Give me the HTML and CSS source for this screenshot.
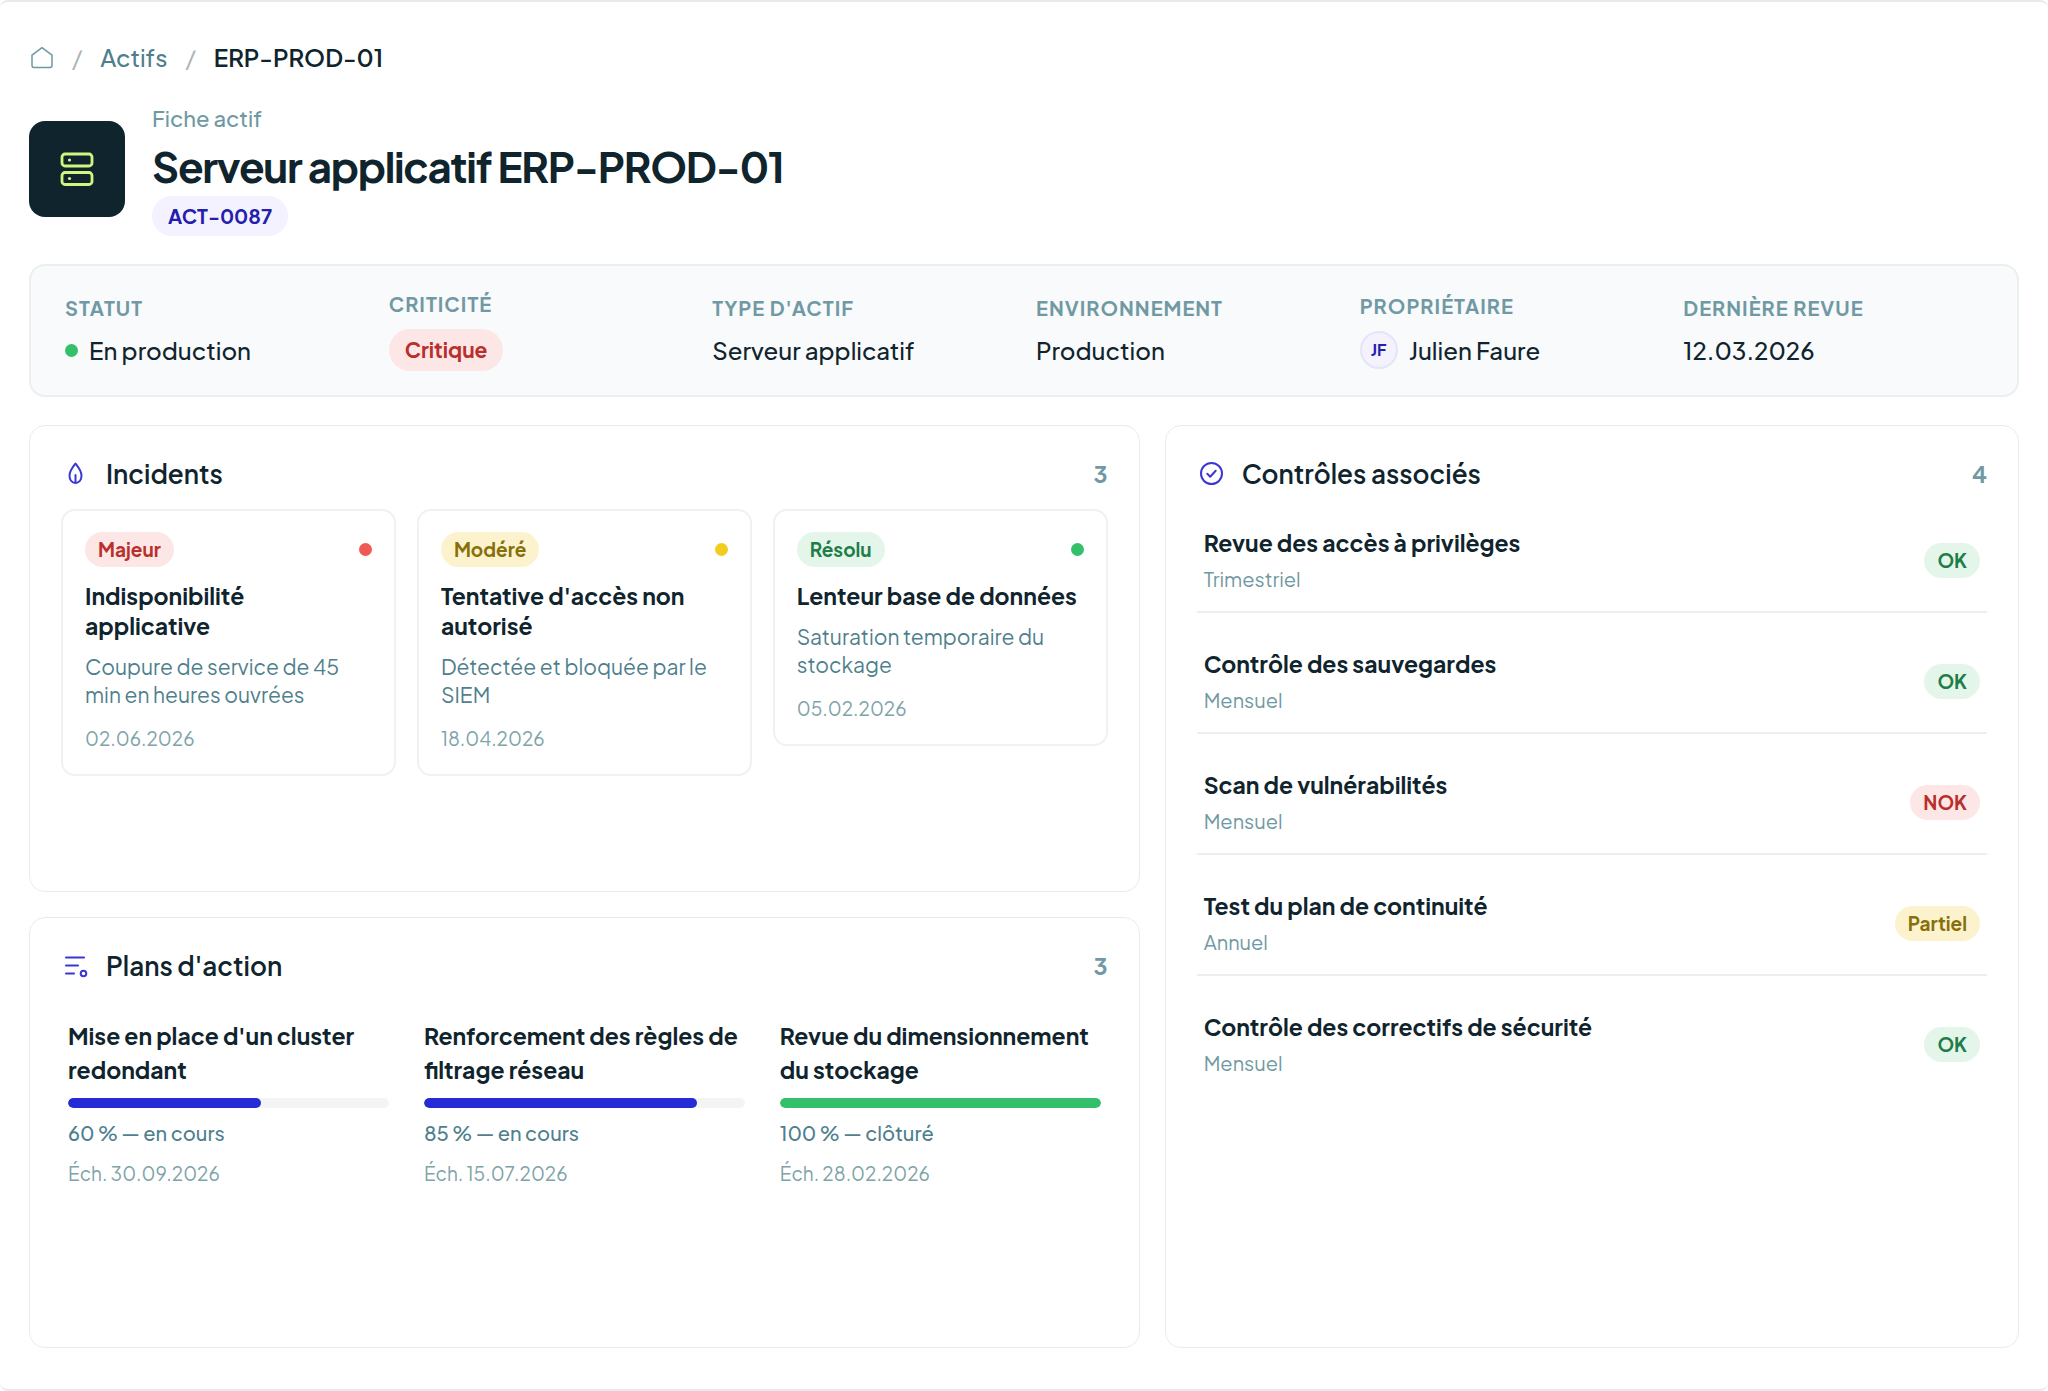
FILE: index.html
```html
<!DOCTYPE html>
<html lang="fr">
<head>
<meta charset="utf-8">
<meta name="viewport" content="width=device-width, initial-scale=1">
<title>ERP-PROD-01 – Fiche actif</title>
<link rel="stylesheet" href="styles.css">
</head>
<body>
<main class="page">
  <nav class="breadcrumb" aria-label="Fil d'Ariane">
    <a class="crumb-home" href="#" aria-label="Accueil">
      <svg width="24" height="24" viewBox="0 0 24 24" fill="none" stroke="currentColor" stroke-width="1.5" stroke-linejoin="round"><path d="M2 10.200 12 2.600l10 7.600V20.600a1.800 1.800 0 0 1-1.800 1.800H3.800A1.800 1.800 0 0 1 2 20.600Z"/></svg>
    </a>
    <span class="crumb-sep">/</span>
    <a class="crumb-link" href="#">Actifs</a>
    <span class="crumb-sep">/</span>
    <span class="crumb-current" aria-current="page">ERP-PROD-01</span>
  </nav>

  <header class="asset-header">
    <div class="asset-icon">
      <svg width="36" height="36" viewBox="0 0 36 36" fill="none" stroke="currentColor" stroke-width="2.800"><rect x="3" y="3" width="30" height="12" rx="3"/><rect x="3" y="21.500" width="30" height="12" rx="3"/><g fill="currentColor" stroke="none"><circle cx="10.500" cy="9" r="1.600"/><circle cx="10.500" cy="27.500" r="1.600"/></g></svg>
    </div>
    <div class="asset-heading">
      <p class="eyebrow">Fiche actif</p>
      <h1 class="asset-title">Serveur applicatif ERP-PROD-01</h1>
      <span class="pill pill-code">ACT-0087</span>
    </div>
  </header>

  <dl class="summary">
    <div class="fact"><dt>Statut</dt><dd><span class="dot dot-green"></span>En production</dd></div>
    <div class="fact"><dt>Criticité</dt><dd><span class="pill pill-large red">Critique</span></dd></div>
    <div class="fact"><dt>Type d'actif</dt><dd>Serveur applicatif</dd></div>
    <div class="fact"><dt>Environnement</dt><dd>Production</dd></div>
    <div class="fact"><dt>Propriétaire</dt><dd><span class="avatar">JF</span>Julien Faure</dd></div>
    <div class="fact"><dt>Dernière revue</dt><dd>12.03.2026</dd></div>
  </dl>

  <div class="panels">
    <section class="panel">
      <div class="panel-head">
        <svg class="panel-icon" viewBox="0 0 26 26" fill="none" stroke="currentColor" stroke-width="2" stroke-linecap="round" stroke-linejoin="round"><path d="M13.500 2.500C11 5.800 7.500 9.500 7.500 14.500c0 4.500 2.500 7.500 6 7.500s6-3 6-7.500C19.500 9.500 16 5.800 13.500 2.500Z"/><path d="M13.500 21.500V14"/></svg>
        <h2>Incidents</h2>
        <span class="count">3</span>
      </div>
      <div class="trio">
        <article class="incident">
          <div class="incident-top"><span class="pill red">Majeur</span><span class="dot dot-red"></span></div>
          <h3>Indisponibilité applicative</h3>
          <p class="desc">Coupure de service de 45 min en heures ouvrées</p>
          <time class="date" datetime="2026-06-02">02.06.2026</time>
        </article>
        <article class="incident">
          <div class="incident-top"><span class="pill yellow">Modéré</span><span class="dot dot-yellow"></span></div>
          <h3>Tentative d'accès non autorisé</h3>
          <p class="desc">Détectée et bloquée par le SIEM</p>
          <time class="date" datetime="2026-04-18">18.04.2026</time>
        </article>
        <article class="incident">
          <div class="incident-top"><span class="pill green">Résolu</span><span class="dot dot-green"></span></div>
          <h3>Lenteur base de données</h3>
          <p class="desc">Saturation temporaire du stockage</p>
          <time class="date" datetime="2026-02-05">05.02.2026</time>
        </article>
      </div>
    </section>

    <section class="panel panel-tall">
      <div class="panel-head">
        <svg class="panel-icon" viewBox="0 0 26 26" fill="none" stroke="currentColor" stroke-width="2" stroke-linecap="round" stroke-linejoin="round"><circle cx="13.500" cy="12.500" r="10.500"/><path d="m9.300 12.800 2.900 2.900 5.500-6"/></svg>
        <h2>Contrôles associés</h2>
        <span class="count">4</span>
      </div>
      <ul class="controls">
        <li><div><h3>Revue des accès à privilèges</h3><p>Trimestriel</p></div><span class="pill green">OK</span></li>
        <li><div><h3>Contrôle des sauvegardes</h3><p>Mensuel</p></div><span class="pill green">OK</span></li>
        <li><div><h3>Scan de vulnérabilités</h3><p>Mensuel</p></div><span class="pill red">NOK</span></li>
        <li><div><h3>Test du plan de continuité</h3><p>Annuel</p></div><span class="pill yellow">Partiel</span></li>
        <li><div><h3>Contrôle des correctifs de sécurité</h3><p>Mensuel</p></div><span class="pill green">OK</span></li>
      </ul>
    </section>

    <section class="panel">
      <div class="panel-head">
        <svg class="panel-icon" viewBox="0 0 26 26" fill="none" stroke="currentColor" stroke-width="2" stroke-linecap="round"><path d="M4 4.500h18M4 12.500h12M4 20.500h8"/><circle cx="21.500" cy="20.500" r="2.800"/></svg>
        <h2>Plans d'action</h2>
        <span class="count">3</span>
      </div>
      <div class="trio">
        <article class="plan">
          <h3>Mise en place d'un cluster redondant</h3>
          <div class="bar"><div class="bar-fill" style="width:60%"></div></div>
          <p class="progress">60 % — en cours</p>
          <p class="date">Éch. 30.09.2026</p>
        </article>
        <article class="plan">
          <h3>Renforcement des règles de filtrage réseau</h3>
          <div class="bar"><div class="bar-fill" style="width:85%"></div></div>
          <p class="progress">85 % — en cours</p>
          <p class="date">Éch. 15.07.2026</p>
        </article>
        <article class="plan">
          <h3>Revue du dimensionnement du stockage</h3>
          <div class="bar"><div class="bar-fill done" style="width:100%"></div></div>
          <p class="progress">100 % — clôturé</p>
          <p class="date">Éch. 28.02.2026</p>
        </article>
      </div>
    </section>
  </div>
</main>
</body>
</html>
```
FILE: styles.css
```css
:root {
  --ink: #10242d;
  --teal: #4f7f8d;
  --muted: #7099a3;
  --line: #e9eced;
  --blue: #252cd6;
  --green: #34c06a;
}

* { box-sizing: border-box; }

body {
  margin: 0;
  background: #fff;
  color: var(--ink);
  font-family: "Plus Jakarta Sans", Inter, sans-serif;
  font-size: 24px;
  line-height: 34px;
}

h1, h2, h3, p, dl, dd, ul { margin: 0; padding: 0; }
svg { display: block; }

.page {
  display: flex;
  flex-direction: column;
  gap: 28px;
  min-height: 100vh;
  padding: 40px 29px 41px;
  border: solid #e8e9ea;
  border-width: 2px 0;
  border-radius: 8px;
}

/* Breadcrumb */
.breadcrumb { display: flex; align-items: center; gap: 18px; height: 30px; margin-bottom: 2px; }
.breadcrumb a { text-decoration: none; }
.crumb-home { color: #6a9aa4; padding-left: 1px; }
.crumb-sep { color: #a9b6b5; }
.crumb-link { color: var(--teal); font-weight: 500; }
.crumb-current { font-weight: 600; }

/* Asset header */
.asset-header { display: flex; align-items: center; gap: 27px; }
.asset-icon {
  display: grid;
  place-items: center;
  width: 96px;
  height: 96px;
  border-radius: 16px;
  background: #10242e;
  color: #d1f57f;
}
.asset-heading { display: flex; flex-direction: column; align-items: flex-start; }
.eyebrow { margin-bottom: 2px; color: var(--muted); font-size: 22px; line-height: 32px; font-weight: 500; }
.asset-title { font-size: 42px; line-height: 60px; font-weight: 700; letter-spacing: -0.03em; }

/* Pills */
.pill {
  padding: 0 13px;
  border-radius: 20px;
  font-size: 19px;
  line-height: 35px;
  font-weight: 700;
  white-space: nowrap;
}
.pill-code { padding: 0 16px; font-size: 20px; line-height: 40px; background: #f3f2fe; color: #2320ae; }
.pill-large { padding: 0 16px; font-size: 21px; line-height: 42px; border-radius: 21px; }
.red { background: #fde7e6; color: #b92f2b; }
.yellow { background: #fcf2cd; color: #86700a; }
.green { background: #e4f6ea; color: #1f7d49; }

.dot { width: 13px; height: 13px; border-radius: 50%; flex: none; }
.dot-green { background: var(--green); }
.dot-red { background: #ef5a54; }
.dot-yellow { background: #f1cd1e; }

/* Summary strip */
.summary {
  display: grid;
  grid-template-columns: repeat(6, 1fr);
  align-items: center;
  column-gap: 24px;
  padding: 24px 34px;
  border: 2px solid #ecefef;
  border-radius: 16px;
  background: #f8fafb;
}
.fact { display: flex; flex-direction: column; gap: 11px; }
.fact dt {
  color: var(--muted);
  font-size: 20px;
  line-height: 28px;
  font-weight: 700;
  letter-spacing: 1px;
  text-transform: uppercase;
}
.fact dd { display: flex; align-items: center; gap: 11px; font-weight: 500; }
.avatar {
  display: grid;
  place-items: center;
  width: 38px;
  height: 38px;
  border: 2px solid #e6e4f7;
  border-radius: 50%;
  background: #f3f2fe;
  color: #2320ae;
  font-size: 16px;
  font-weight: 700;
}

/* Panels */
.panels {
  flex: 1;
  display: grid;
  grid-template-columns: 13fr 10fr;
  grid-template-rows: 52fr 48fr;
  gap: 25px;
}
.panel { padding: 32px 31px; border: 1px solid var(--line); border-radius: 16px; }
.panel-tall { grid-column: 2; grid-row: 1 / span 2; }
.panel-head { display: flex; align-items: center; gap: 18px; height: 32px; margin-bottom: 19px; padding-left: 1px; }
.panel-icon { width: 26px; height: 26px; color: #3a37d4; }
.panel-head h2 { font-size: 26px; font-weight: 600; }
.count { margin-left: auto; color: var(--muted); font-size: 23px; font-weight: 700; }
.panel h3 { font-size: 23px; font-weight: 700; }
.trio { display: grid; grid-template-columns: repeat(3, 1fr); gap: 21px; align-items: start; }

/* Incidents */
.incident {
  display: flex;
  flex-direction: column;
  padding: 21px 22px;
  border: 2px solid #eff1f2;
  border-radius: 14px;
}
.incident-top { display: flex; align-items: center; justify-content: space-between; margin-bottom: 14px; }
.incident h3 { line-height: 30px; margin-bottom: 12px; }
.desc { color: var(--teal); font-size: 21px; line-height: 28px; margin-bottom: 14px; }
.date { color: #7ea3a9; font-size: 19px; line-height: 30px; }

/* Plans */
.plan { display: flex; flex-direction: column; gap: 11px; padding: 18px 7px; }
.bar { height: 10px; border-radius: 5px; background: #f3f5f5; overflow: hidden; }
.bar-fill { height: 100%; border-radius: 5px; background: var(--blue); }
.bar-fill.done { background: var(--green); }
.progress { color: var(--teal); font-size: 20px; line-height: 28px; font-weight: 500; }

/* Controls */
.controls { display: flex; flex-direction: column; gap: 17px; list-style: none; }
.controls li {
  display: flex;
  align-items: center;
  justify-content: space-between;
  padding: 17px 7px;
  border-bottom: 2px solid #eceff0;
}
.controls li:last-child { border-bottom: 0; }
.controls p { margin-top: 4px; color: var(--muted); font-size: 20px; line-height: 30px; }
```
